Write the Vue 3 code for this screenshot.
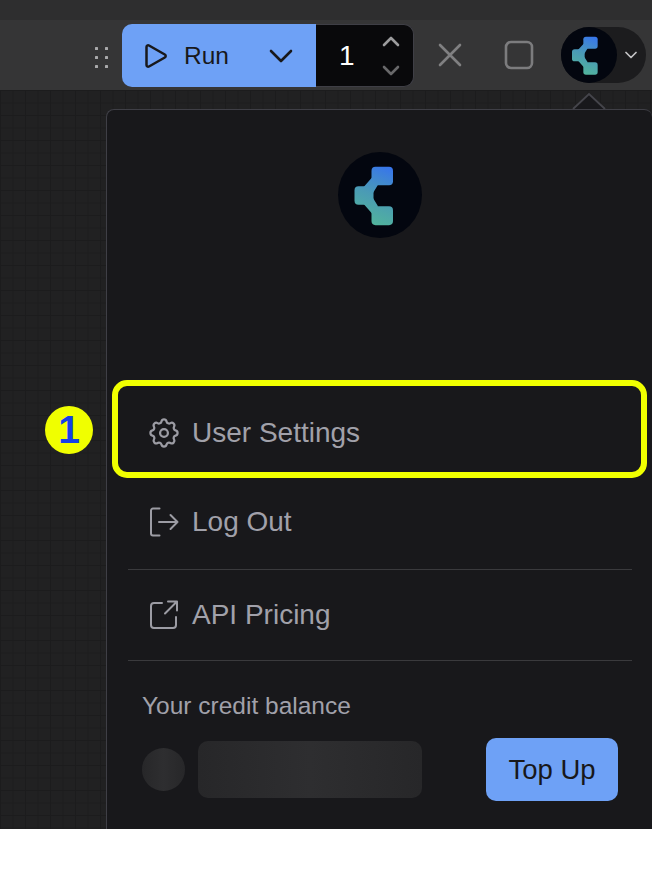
<template>
  <div class="screen">
    <div class="top-strip"></div>
    <header class="toolbar">
      <svg class="grip" width="14" height="26" viewBox="0 0 14 26">
        <rect v-for="dot in gripDots" :key="dot.x + '-' + dot.y" :x="dot.x" :y="dot.y" width="3" height="3" rx="0.6" fill="#a9a9ab" />
      </svg>
      <div class="run-group">
        <button class="run-btn">
          <svg class="play" width="26" height="26" viewBox="0 0 26 26" fill="none" stroke="#18181b" stroke-width="2.500" stroke-linejoin="round">
            <path d="M3.500 4c0-1.400 1.300-2.200 2.500-1.500l15.800 9c1.200.7 1.200 2.300 0 3L6 23.500c-1.200.7-2.500-.1-2.500-1.500z" />
          </svg>
          <span class="run-label">Run</span>
          <svg class="run-chev" width="24" height="14" viewBox="0 0 24 14" fill="none" stroke="#18181b" stroke-width="2.600" stroke-linecap="round" stroke-linejoin="round">
            <path d="M2 2l10 10L22 2" />
          </svg>
        </button>
        <div class="count-box">
          <span class="count">1</span>
          <div class="steppers">
            <svg width="18" height="11" viewBox="0 0 18 11" fill="none" stroke="#9c9c9e" stroke-width="2.600" stroke-linecap="round" stroke-linejoin="round"><path d="M2 9l7-7 7 7" /></svg>
            <svg width="18" height="11" viewBox="0 0 18 11" fill="none" stroke="#68686a" stroke-width="2.600" stroke-linecap="round" stroke-linejoin="round"><path d="M2 2l7 7 7-7" /></svg>
          </div>
        </div>
      </div>
      <svg class="close" width="26" height="26" viewBox="0 0 26 26" fill="none" stroke="#808082" stroke-width="2.600" stroke-linecap="round">
        <path d="M3 3l20 20M23 3L3 23" />
      </svg>
      <svg class="stop" width="30" height="30" viewBox="0 0 30 30" fill="none" stroke="#7c7c7e" stroke-width="2.600">
        <rect x="2" y="2" width="26" height="26" rx="5" />
      </svg>
      <div class="avatar-pill">
        <div class="avatar">
          <svg width="56" height="56" viewBox="0 0 84 84">
            <use href="#brand-mark" />
          </svg>
        </div>
        <svg class="pill-chev" width="12" height="8" viewBox="0 0 12 8" fill="none" stroke="#c4c4c6" stroke-width="1.700" stroke-linecap="round" stroke-linejoin="round"><path d="M1 1.500l5 5 5-5" /></svg>
      </div>
    </header>

    <main class="canvas">
      <section class="panel">
        <svg class="caret" width="34" height="17" viewBox="0 0 34 17">
          <path d="M1 16L17 1l16 15" fill="#18181b" stroke="#45454b" stroke-width="1.800" />
        </svg>
        <div class="panel-logo">
          <svg width="84" height="86" viewBox="0 0 84 84" preserveAspectRatio="none">
            <defs>
              <linearGradient id="brand-grad" gradientUnits="userSpaceOnUse" x1="52" y1="15" x2="30" y2="71">
                <stop offset="0" stop-color="#3775ec" />
                <stop offset="0.5" stop-color="#4a9ab6" />
                <stop offset="1" stop-color="#52b69a" />
              </linearGradient>
              <g id="brand-mark">
                <circle cx="42" cy="42" r="42" fill="#03060f" />
                <g fill="url(#brand-grad)">
                  <rect x="33.500" y="14.500" width="21.500" height="18" rx="4" />
                  <rect x="16.500" y="33.500" width="19" height="18" rx="4" />
                  <rect x="33.500" y="53" width="21.500" height="18.500" rx="4" />
                  <path d="M25 35l9-10 6 7-5 8zM25 50l9 10 6-7-5-8z" />
                </g>
              </g>
            </defs>
            <use href="#brand-mark" />
          </svg>
        </div>

        <nav class="menu">
          <a class="menu-row settings">
            <svg class="menu-icon" width="30" height="30" viewBox="2 2 20 20" fill="none" stroke="#9c9ca4" stroke-width="1.500" stroke-linecap="round" stroke-linejoin="round">
              <path d="M10.300 4.300c.4-1.800 3-1.800 3.400 0a1.700 1.700 0 0 0 2.600 1.100c1.500-.9 3.300.8 2.400 2.400a1.700 1.700 0 0 0 1 2.500c1.800.4 1.800 3 0 3.400a1.700 1.700 0 0 0-1 2.600c.9 1.500-.9 3.300-2.400 2.400a1.700 1.700 0 0 0-2.600 1c-.4 1.800-3 1.800-3.400 0a1.700 1.700 0 0 0-2.600-1c-1.500.9-3.300-.9-2.400-2.400a1.700 1.700 0 0 0-1-2.600c-1.800-.4-1.800-3 0-3.400a1.700 1.700 0 0 0 1-2.500c-.9-1.600.9-3.300 2.400-2.400a1.700 1.700 0 0 0 2.600-1.100z" />
              <circle cx="12" cy="12" r="2.600" />
            </svg>
            <span>User Settings</span>
          </a>
          <a class="menu-row logout">
            <svg class="menu-icon" width="30" height="30" viewBox="0 0 30 30" fill="none" stroke="#9c9ca4" stroke-width="2" stroke-linecap="round" stroke-linejoin="round">
              <path d="M10.500 1.500H4a2 2 0 0 0-2 2v23a2 2 0 0 0 2 2h6.500" />
              <path d="M10 15h18.500M21.500 8l7 7-7 7" />
            </svg>
            <span>Log Out</span>
          </a>
          <div class="divider"></div>
          <a class="menu-row pricing">
            <svg class="menu-icon" width="30" height="30" viewBox="0 0 30 30" fill="none" stroke="#9c9ca4" stroke-width="2" stroke-linecap="round" stroke-linejoin="round">
              <path d="M13 3H5a3 3 0 0 0-3 3v19a3 3 0 0 0 3 3h19a3 3 0 0 0 3-3v-8" />
              <path d="M19 1.500h9v9M28 1.500L16 13.500" />
            </svg>
            <span>API Pricing</span>
          </a>
          <div class="divider"></div>
        </nav>

        <div class="credit">
          <div class="credit-label">Your credit balance</div>
          <div class="credit-row">
            <div class="skeleton-dot"></div>
            <div class="skeleton-bar"></div>
            <button class="top-up">Top Up</button>
          </div>
        </div>
      </section>

      <div class="highlight"></div>
      <div class="badge">1</div>
    </main>
  </div>
</template>

<script setup>
const gripDots = [];
for (const y of [5, 14, 23]) {
  for (const x of [1, 11]) {
    gripDots.push({ x, y });
  }
}
</script>

<style>
html, body {
  background: #fff;
}
</style>

<style scoped>
.screen {
  width: 652px;
  height: 829px;
  display: flex;
  flex-direction: column;
  overflow: hidden;
  font-family: "Liberation Sans", Arial, sans-serif;
  background: #212122;
}

.top-strip {
  height: 20px;
  background: #2e2e2f;
}

.toolbar {
  height: 70px;
  display: flex;
  align-items: center;
  padding-left: 94px;
  background: #353536;
}

.grip {
  flex: none;
}

.run-group {
  margin-left: 14px;
  margin-top: 1px;
  display: flex;
  width: 292px;
  height: 63px;
}

.run-btn {
  width: 194px;
  display: flex;
  align-items: center;
  padding: 0 0 0 21px;
  border: 0;
  border-radius: 10px 0 0 10px;
  background: #6ea1f6;
  color: #18181b;
  font-family: inherit;
}

.run-label {
  margin-left: 15px;
  font-size: 24.500px;
}

.run-chev {
  margin-left: 40px;
}

.count-box {
  flex: 1;
  display: flex;
  align-items: center;
  border: 1px solid #3f3f46;
  border-left: 0;
  border-radius: 0 10px 10px 0;
  background: #09090b;
}

.count {
  margin-left: 23px;
  color: #fff;
  font-size: 28px;
}

.steppers {
  margin-left: 27px;
  display: flex;
  flex-direction: column;
  gap: 18px;
}

.close {
  margin-left: 23px;
}

.stop {
  margin-left: 41px;
}

.avatar-pill {
  margin-left: 27px;
  width: 85px;
  height: 56px;
  display: flex;
  align-items: center;
  border-radius: 28px;
  background: #1c1c1e;
}

.avatar {
  width: 56px;
  height: 56px;
  flex: none;
}

.pill-chev {
  margin-left: 8px;
}

.canvas {
  position: relative;
  flex: 1;
  padding: 19px 0 0 106px;
  background-color: #212122;
  background-image:
    linear-gradient(#1c1c1d 1px, transparent 1px),
    linear-gradient(90deg, #1c1c1d 1px, transparent 1px);
  background-size: 12.500px 12.500px;
}

.panel {
  position: relative;
  height: 100%;
  box-sizing: border-box;
  border-top: 1px solid #3f3f46;
  border-left: 1px solid #3f3f46;
  border-radius: 8px 8px 0 0;
  background: #18181b;
  padding-top: 42px;
}

.caret {
  position: absolute;
  top: -17px;
  left: 465px;
}

.panel-logo {
  display: flex;
  justify-content: center;
  height: 86px;
}

.menu {
  margin-top: 153px;
  padding: 0 20px 0 21px;
  display: flex;
  flex-direction: column;
}

.menu-row {
  display: flex;
  align-items: center;
  height: 90px;
  padding-left: 21px;
  color: #a1a1aa;
  font-size: 28px;
}

.menu-icon {
  flex: none;
  margin-right: 13px;
}

.settings {
  height: 83px;
}

.logout {
  height: 95px;
}

.divider {
  height: 1px;
  background: #3a3a3d;
}

.credit {
  padding: 31px 34px 0 35px;
}

.credit-label {
  color: #a1a1aa;
  font-size: 24.500px;
  line-height: 28px;
}

.credit-row {
  margin-top: 18px;
  display: flex;
  align-items: center;
}

.skeleton-dot {
  width: 43px;
  height: 43px;
  border-radius: 50%;
  background: linear-gradient(90deg, #272729, #2e2e30, #272729);
}

.skeleton-bar {
  margin-left: 13px;
  width: 224px;
  height: 57px;
  border-radius: 10px;
  background: linear-gradient(90deg, #272729, #2e2e30 50%, #272729);
}

.top-up {
  margin-left: 64px;
  width: 132px;
  height: 63px;
  border: 0;
  border-radius: 10px;
  background: #6ea1f6;
  color: #18181b;
  font-family: inherit;
  font-size: 27.500px;
}

.highlight {
  position: absolute;
  left: 112px;
  top: 290px;
  width: 535px;
  height: 98px;
  box-sizing: border-box;
  border: 6px solid #f0ff00;
  border-radius: 15px;
}

.badge {
  position: absolute;
  left: 45px;
  top: 316px;
  width: 48px;
  height: 48px;
  border-radius: 50%;
  background: #f0ff00;
  color: #1440e8;
  font-size: 39px;
  font-weight: 700;
  line-height: 48px;
  text-align: center;
}
</style>
